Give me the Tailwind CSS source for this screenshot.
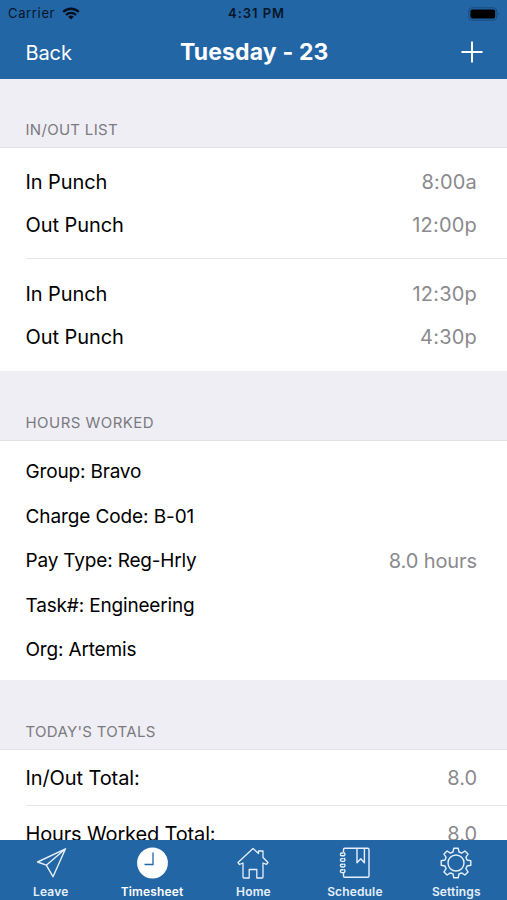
<!DOCTYPE html>
<html lang="en">
<head>
    <meta charset="UTF-8">
    <title>Timesheet</title>
    <script src="https://cdn.jsdelivr.net/npm/@tailwindcss/browser@4"></script>
</head>
<body class="bg-[#efeef4] text-black font-['Inter',sans-serif]">

<div class="h-[900px] w-[507px] flex flex-col overflow-hidden">

    <!-- Header -->
    <header class="h-[79px] shrink-0 bg-[#2266a6] flex flex-col">
        <div class="h-[27px] grid grid-cols-3 items-center pl-2 pr-[7px] text-[#061628]">
            <div class="flex items-center gap-[7px]">
                <span class="pt-px text-[13px] tracking-[0.65px]">Carrier</span>
                <svg class="w-[18px] h-[13px]" viewBox="0 0 18 13" fill="none" stroke="#04101f" stroke-width="2.3">
                    <path d="M1.2 5 A11 11 0 0 1 16.8 5"/>
                    <path d="M4 8 A7 7 0 0 1 14 8"/>
                    <path d="M9 12.6 L6.2 9.8 A4 4 0 0 1 11.8 9.8 Z" fill="#04101f" stroke="none"/>
                </svg>
            </div>
            <span class="pt-px pl-[5px] text-[13px] font-semibold text-center whitespace-nowrap tracking-[0.95px]">4:31 PM</span>
            <svg class="justify-self-end w-[32px] h-[14px]" viewBox="0 0 32 14">
                <rect x="0.8" y="0.8" width="28" height="12.4" rx="3.4" fill="none" stroke="#174b7e"/>
                <rect x="2.4" y="2.4" width="24.8" height="9.2" rx="1.8" fill="#000"/>
                <path d="M30 5 Q31.6 7 30 9 Z" fill="#174b7e"/>
            </svg>
        </div>
        <div class="h-[50px] grid grid-cols-3 items-center pl-[25.5px] pr-[24px] text-white">
            <span class="pt-px text-[20px] tracking-[-0.1px]">Back</span>
            <h1 class="text-[23px] font-bold text-center whitespace-nowrap tracking-[0.15px]">Tuesday - 23</h1>
            <svg class="justify-self-end w-[22px] h-[22px]" viewBox="0 0 22 22" fill="none" stroke="currentColor" stroke-width="1.9">
                <path d="M11 0.5V21.5M0.5 11H21.5"/>
            </svg>
        </div>
    </header>

    <main class="flex-1 min-h-0 overflow-hidden">
        <!-- In/Out List -->
        <h2 class="h-[69px] border-b border-[#e2e1e6] flex items-end pl-[25.5px] pb-[7px] text-[15px] leading-5 tracking-[0.3px] text-[#7a7a80]">IN/OUT LIST</h2>
        <section class="bg-white pl-[25.5px] text-[20px] leading-[43px]">
            <div class="h-[110px] pt-[13px] pr-[30px]">
                <div class="flex justify-between"><span class="tracking-[-0.08px]">In Punch</span><span class="tracking-[0.2px] text-[#8a8a8e]">8:00a</span></div>
                <div class="flex justify-between"><span class="tracking-[-0.08px]">Out Punch</span><span class="tracking-[0.2px] text-[#8a8a8e]">12:00p</span></div>
            </div>
            <div class="h-[113px] pt-[14px] pr-[30px] border-t border-[#e6e6e8]">
                <div class="flex justify-between"><span class="tracking-[-0.08px]">In Punch</span><span class="tracking-[0.2px] text-[#8a8a8e]">12:30p</span></div>
                <div class="flex justify-between"><span class="tracking-[-0.08px]">Out Punch</span><span class="tracking-[0.2px] text-[#8a8a8e]">4:30p</span></div>
            </div>
        </section>

        <!-- Hours Worked -->
        <h2 class="h-[70px] border-b border-[#e2e1e6] flex items-end pl-[25.5px] pb-[7px] text-[15px] leading-5 tracking-[0.45px] text-[#7a7a80]">HOURS WORKED</h2>
        <section class="h-[239px] bg-white pl-[25.5px] pr-[30px] flex items-center justify-between">
            <div class="pt-[2px] text-[19px] leading-[44.4px] tracking-[-0.17px]">
                <p>Group: Bravo</p>
                <p class="tracking-[-0.1px]">Charge Code: B-01</p>
                <p>Pay Type: Reg-Hrly</p>
                <p>Task#: Engineering</p>
                <p>Org: Artemis</p>
            </div>
            <span class="text-[20px] tracking-[-0.1px] text-[#8a8a8e]">8.0 hours</span>
        </section>

        <!-- Today's Totals -->
        <h2 class="h-[70px] border-b border-[#e2e1e6] flex items-end pl-[25.5px] pb-[7px] text-[15px] leading-5 tracking-[0.3px] text-[#7a7a80]">TODAY'S TOTALS</h2>
        <section class="bg-white pl-[25.5px] text-[20px]">
            <div class="h-[55px] pt-px pr-[30px] flex items-center justify-between">
                <span class="tracking-[-0.1px]">In/Out Total:</span><span class="text-[#8a8a8e]">8.0</span>
            </div>
            <div class="h-[57px] pr-[30px] border-t border-[#e6e6e8] flex items-center justify-between">
                <span class="tracking-[-0.15px]">Hours Worked Total:</span><span class="text-[#8a8a8e]">8.0</span>
            </div>
        </section>
    </main>

    <!-- Tab bar -->
    <nav class="h-[60px] shrink-0 bg-[#2266a6] grid grid-cols-5 pt-[6px] text-[#e6f0fa] text-[12px] leading-[14px] font-semibold tracking-[0.15px]">
        <div class="flex flex-col items-center gap-[5px]">
            <svg class="w-[34px] h-[34px]" viewBox="0 0 34 34" fill="none" stroke="currentColor" stroke-width="1.4" stroke-linejoin="round">
                <path d="M31.5 2.8 L3.6 16 L12.3 19.2 L19 30.7 Z L12.3 19.2"/>
            </svg>
            <span>Leave</span>
        </div>
        <div class="flex flex-col items-center gap-[5px]">
            <svg class="w-[34px] h-[34px]" viewBox="0 0 34 34">
                <circle cx="17.5" cy="17" r="15.4" fill="#fff"/>
                <path d="M18 6.5 V18.5 H9.5" fill="none" stroke="#2266a6" stroke-width="1.3"/>
            </svg>
            <span class="text-white">Timesheet</span>
        </div>
        <div class="flex flex-col items-center gap-[5px]">
            <svg class="w-[34px] h-[34px]" viewBox="0 0 34 34" fill="none" stroke="currentColor" stroke-width="1.3" stroke-linejoin="round">
                <path d="M17 2.5 L2 16.5 L3.5 18.5 L7 17 V31 Q7 32 8 32 H13.2 V23.5 H20.8 V32 H26 Q27 32 27 31 V17 L30.5 18.3 L32 16.5 L27 11.5 V5 H22.5 V7.5 Z"/>
            </svg>
            <span>Home</span>
        </div>
        <div class="flex flex-col items-center gap-[5px]">
            <svg class="w-[34px] h-[34px]" viewBox="0 0 34 34" fill="none" stroke="currentColor" stroke-width="1.4" stroke-linejoin="round">
                <path d="M5.5 6.5 V3.5 Q5.5 2.3 6.7 2.3 H29.8 Q31 2.3 31 3.5 V30 Q31 31.3 29.8 31.3 H6.7 Q5.5 31.3 5.5 30 V27"/>
                <path d="M19 2.5 V16.8 L22.7 12.8 L26.4 16.8 V2.5"/>
                <path d="M5.5 7 H3.8 A1.4 1.4 0 0 0 3.8 9.8 H6 A1.8 1.8 0 0 0 6 6.6 M5.5 12.6 H3.8 A1.4 1.4 0 0 0 3.8 15.4 H6 A1.8 1.8 0 0 0 6 12.2 M5.5 18.2 H3.8 A1.4 1.4 0 0 0 3.8 21 H6 A1.8 1.8 0 0 0 6 17.8 M5.5 23.8 H3.8 A1.4 1.4 0 0 0 3.8 26.6 H6 A1.8 1.8 0 0 0 6 23.4"/>
            </svg>
            <span>Schedule</span>
        </div>
        <div class="flex flex-col items-center gap-[5px]">
            <svg class="w-[34px] h-[34px]" viewBox="-17 -17 34 34" fill="none" stroke="currentColor" stroke-width="1.4" stroke-linejoin="round">
                <path d="M-3 -11 L-2.2 -14.8 H2.2 L3 -11 L5.66 -9.9 L8.91 -12.02 L12.02 -8.91 L9.9 -5.66 L11 -3 L14.8 -2.2 V2.2 L11 3 L9.9 5.66 L12.02 8.91 L8.91 12.02 L5.66 9.9 L3 11 L2.2 14.8 H-2.2 L-3 11 L-5.66 9.9 L-8.91 12.02 L-12.02 8.91 L-9.9 5.66 L-11 3 L-14.8 2.2 V-2.2 L-11 -3 L-9.9 -5.66 L-12.02 -8.91 L-8.91 -12.02 L-5.66 -9.9 Z"/>
                <circle r="8"/>
            </svg>
            <span>Settings</span>
        </div>
    </nav>

</div>

</body>
</html>
